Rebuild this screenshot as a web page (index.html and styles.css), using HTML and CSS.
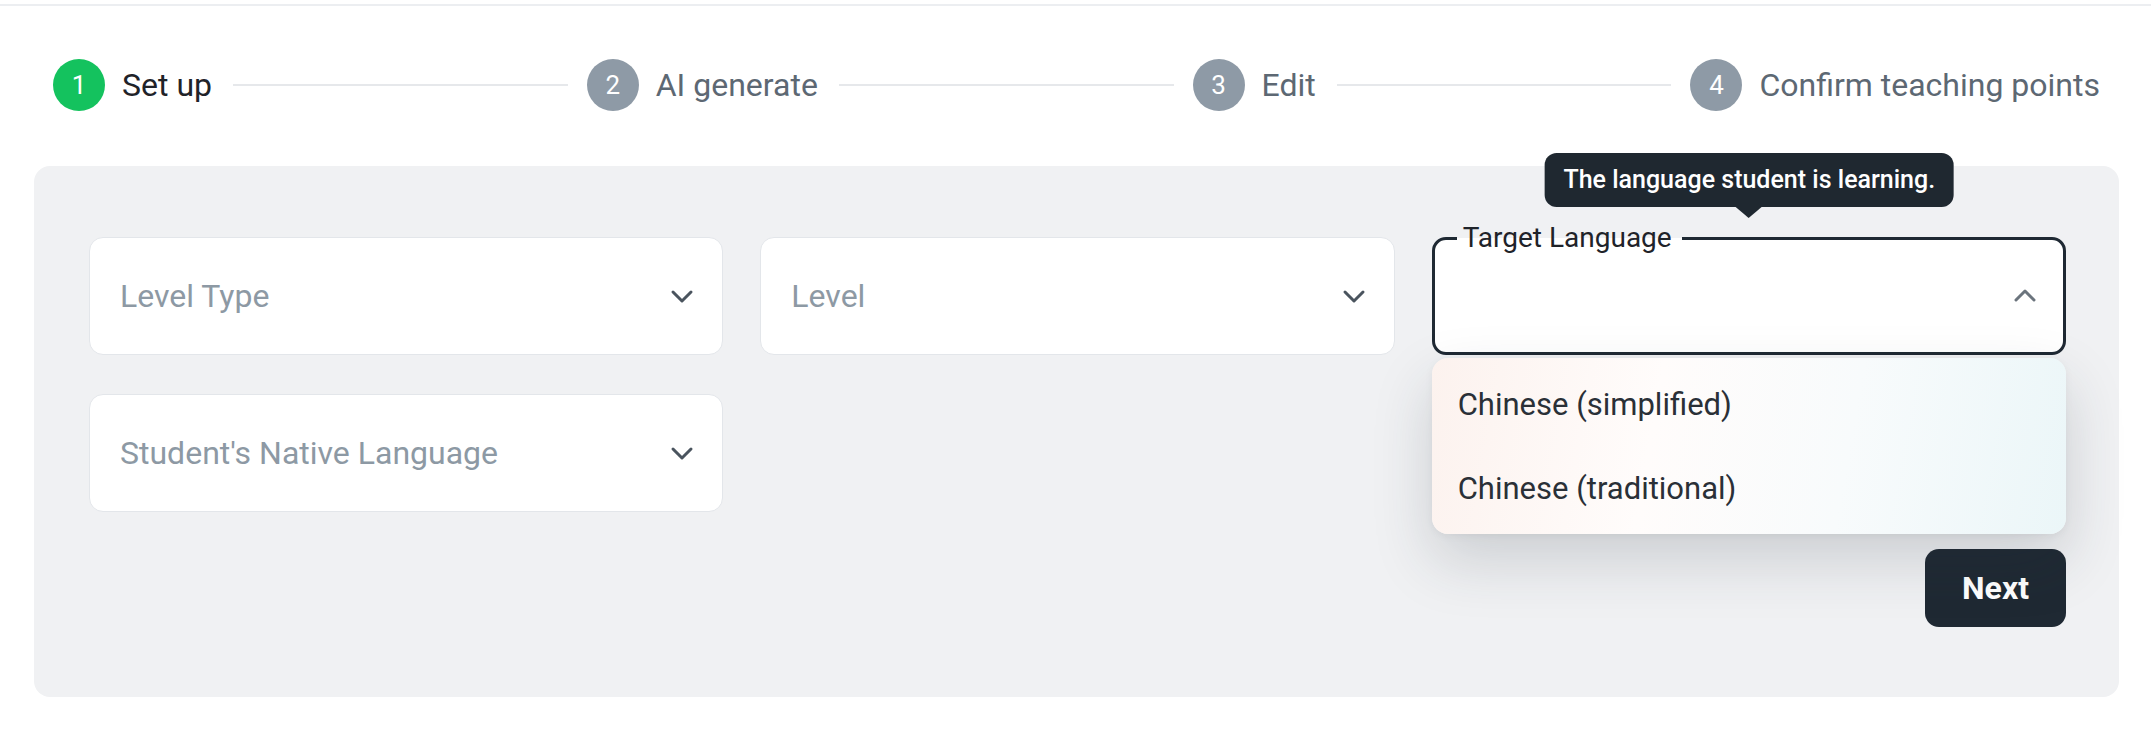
FILE: index.html
```html
<!DOCTYPE html>
<html lang="en">
<head>
  <meta charset="UTF-8">
  <title>Set up lesson</title>
  <link rel="stylesheet" href="styles.css">
</head>
<body>

<div class="top-bar"></div>

<div class="page">
  <div class="stepper">
    <div class="step active">
      <span class="step-num">1</span>
      <span class="step-label">Set up</span>
    </div>
    <div class="step-line"></div>
    <div class="step">
      <span class="step-num">2</span>
      <span class="step-label">AI generate</span>
    </div>
    <div class="step-line"></div>
    <div class="step">
      <span class="step-num">3</span>
      <span class="step-label">Edit</span>
    </div>
    <div class="step-line"></div>
    <div class="step">
      <span class="step-num">4</span>
      <span class="step-label">Confirm teaching points</span>
    </div>
  </div>

  <div class="panel">
    <div class="fields">
      <div class="field">
        <span class="placeholder">Level Type</span>
        <svg class="chevron" viewBox="0 0 24 24"><path d="M3 8l9 9 9-9"/></svg>
      </div>
      <div class="field">
        <span class="placeholder">Level</span>
        <svg class="chevron" viewBox="0 0 24 24"><path d="M3 8l9 9 9-9"/></svg>
      </div>
      <div class="field open">
        <div class="tooltip">The language student is learning.</div>
        <span class="field-label">Target Language</span>
        <svg class="chevron up" viewBox="0 0 24 24"><path d="M3 16l9-9 9 9"/></svg>
        <ul class="menu">
          <li>Chinese (simplified)</li>
          <li>Chinese (traditional)</li>
        </ul>
      </div>
      <div class="field">
        <span class="placeholder">Student's Native Language</span>
        <svg class="chevron" viewBox="0 0 24 24"><path d="M3 8l9 9 9-9"/></svg>
      </div>
    </div>

    <div class="actions">
      <button class="next-btn">Next</button>
    </div>
  </div>
</div>

</body>
</html>
```

FILE: styles.css
```css
body {
  margin: 0;
  font-family: Roboto, 'Liberation Sans', sans-serif;
  background: #fff;
  color: #1f2329;
}
.top-bar {
  height: 4px;
  border-bottom: 2px solid #eceef1;
}
.page {
  padding: 0 32px 0 34px;
}
.stepper {
  display: flex;
  align-items: center;
  padding: 53px 19px 0;
}
.step {
  display: flex;
  align-items: center;
  gap: 17px;
}
.step-num {
  width: 52px;
  height: 52px;
  border-radius: 50%;
  background: #8e9aa6;
  color: #fff;
  font-size: 26px;
  display: flex;
  align-items: center;
  justify-content: center;
}
.step.active .step-num {
  background: #14c25e;
}
.step-label {
  font-size: 32px;
  color: #5d6873;
}
.step.active .step-label {
  color: #1f2329;
}
.step-line {
  flex: 1;
  height: 2px;
  background: #e6e8eb;
  margin: 0 19px 0 21px;
}
.panel {
  margin-top: 55px;
  background: #f0f1f3;
  border-radius: 16px;
  padding: 71px 53px 70px 55px;
}
.fields {
  display: grid;
  grid-template-columns: repeat(3, 1fr);
  column-gap: 37px;
  row-gap: 39px;
}
.field {
  position: relative;
  height: 118px;
  box-sizing: border-box;
  background: #fff;
  border: 1px solid #e3e6ea;
  border-radius: 14px;
  display: flex;
  align-items: center;
  justify-content: space-between;
  padding: 0 28px 0 30px;
}
.placeholder {
  font-size: 32px;
  color: #8d99a4;
}
.chevron {
  width: 24px;
  height: 24px;
  fill: none;
  stroke: #4a545e;
  stroke-width: 3;
  stroke-linecap: round;
  stroke-linejoin: round;
}
.chevron.up {
  margin-left: auto;
  stroke: #6b747d;
}
.field.open {
  border: 3px solid #1f2933;
  padding: 0 26px 0 28px;
}
.field-label {
  position: absolute;
  top: -2px;
  left: 22px;
  transform: translateY(-50%);
  padding: 0 10px 0 6px;
  font-size: 28px;
  line-height: 30px;
  background: linear-gradient(#f0f1f3 50%, #fff 50%);
  color: #1f2329;
}
.tooltip {
  position: absolute;
  bottom: calc(100% + 33px);
  left: 50%;
  transform: translateX(-50%);
  background: #1f2830;
  color: #fff;
  font-size: 25px;
  font-weight: 500;
  line-height: 30px;
  padding: 12px 18px 12px 19px;
  border-radius: 12px;
  white-space: nowrap;
}
.tooltip::after {
  content: "";
  position: absolute;
  top: 100%;
  left: 50%;
  margin-left: -13px;
  border-left: 13px solid transparent;
  border-right: 13px solid transparent;
  border-top: 11px solid #1f2830;
}
.menu {
  position: absolute;
  top: calc(100% + 6px);
  left: -3px;
  right: -3px;
  margin: 0;
  padding: 4px 0;
  list-style: none;
  border-radius: 16px;
  background: linear-gradient(100deg, #fcf2ee 0%, #fffcfb 35%, #f8fbfc 65%, #ebf6f8 100%);
  box-shadow: 0 26px 60px rgba(40, 50, 60, 0.18), 0 2px 8px rgba(0, 0, 0, 0.05);
  z-index: 2;
}
.menu li {
  height: 84px;
  display: flex;
  align-items: center;
  padding-left: 26px;
  font-size: 31px;
  color: #2a3037;
}
.actions {
  display: flex;
  justify-content: flex-end;
  margin-top: 37px;
}
.next-btn {
  height: 78px;
  padding: 0 37px;
  border: none;
  border-radius: 14px;
  background: #1f2933;
  color: #fff;
  font-family: inherit;
  font-size: 32px;
  font-weight: 700;
}
```
